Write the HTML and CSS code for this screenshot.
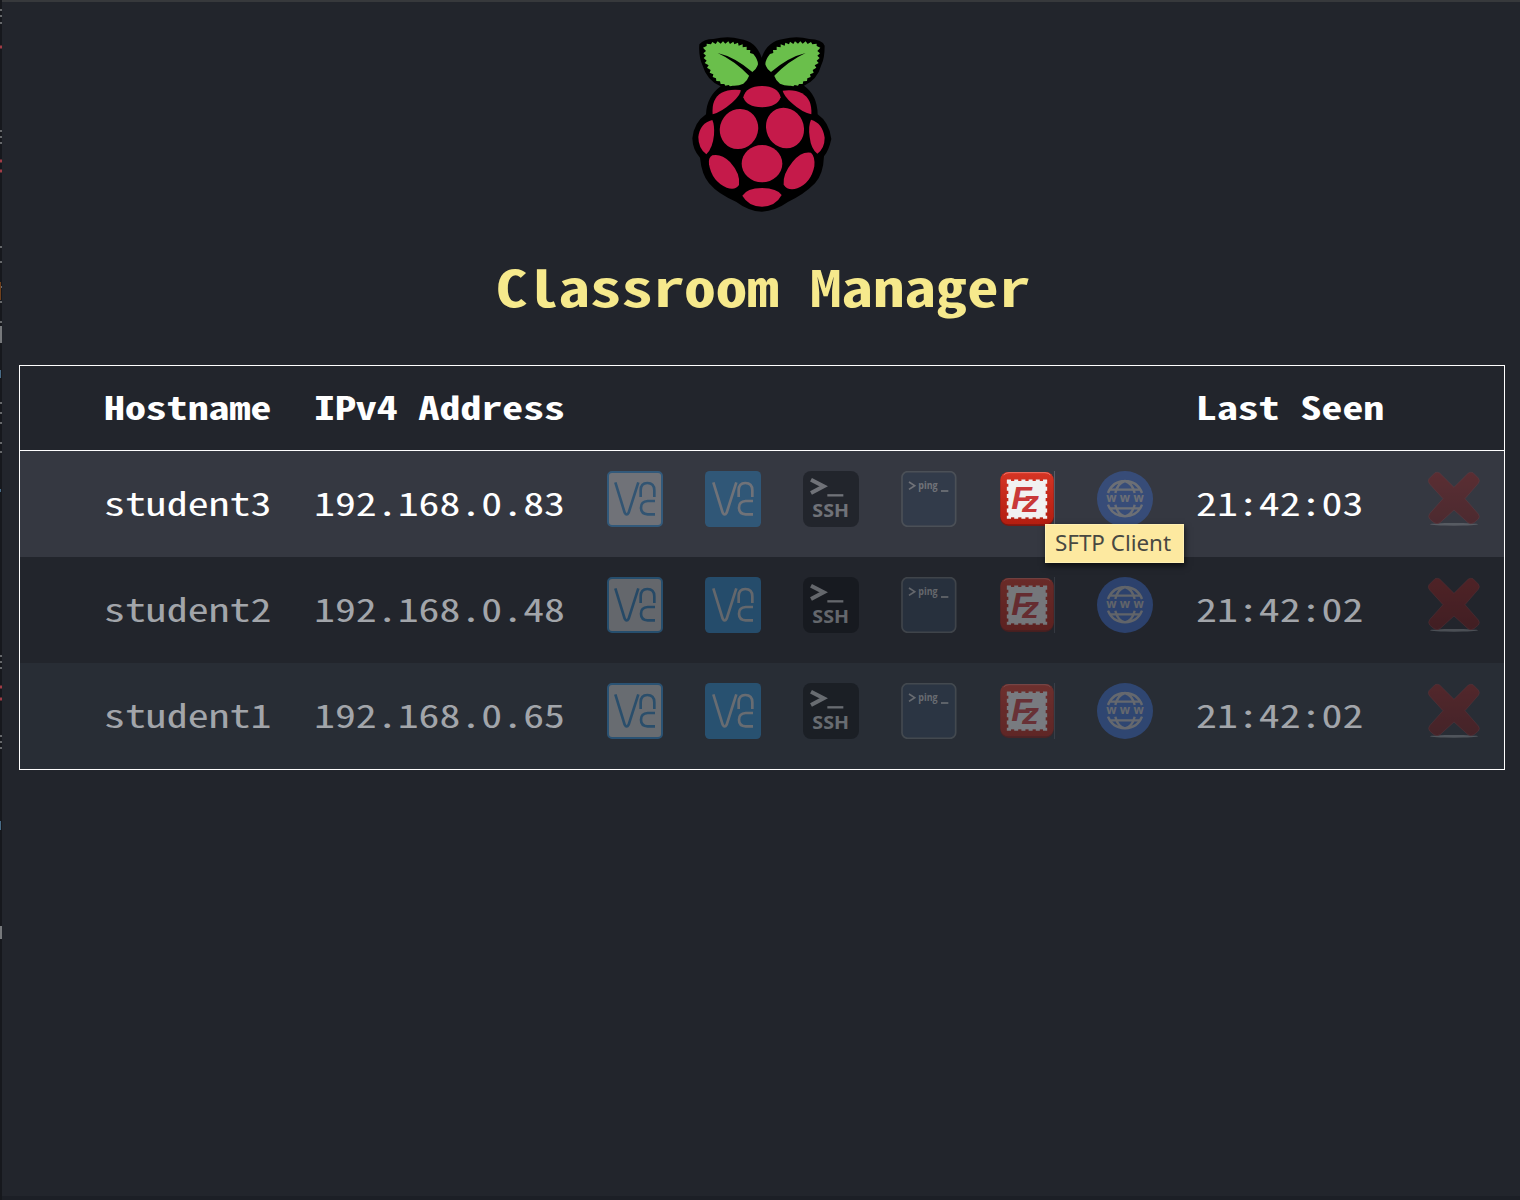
FILE: index.html
```
<!DOCTYPE html>
<html lang="en">
<head>
<meta charset="utf-8">
<title>Classroom Manager</title>
<link rel="stylesheet" href="styles.css">
</head>
<body>
<svg class="edge" width="2" height="1200" viewBox="0 0 2 1200" aria-hidden="true">
  <rect width="2" height="1200" fill="#16181d"/>
  <path stroke="#66686b" stroke-width="2" d="M0 10h2M0 16h2M0 23h2M0 131h2M0 137h2M0 143h2M0 247h2M0 262h2M0 287h2M0 302h2M0 322h2M0 403h2M0 413h2M0 423h2M0 443h2M0 452h2M0 656h2M0 662h2M0 668h2M0 736h2M0 742h2M0 748h2"/>
  <path stroke="#a03c46" stroke-width="3" d="M0 47h2M0 161h2M0 171h2M0 687h2M0 699h2"/>
  <path stroke="#70401c" stroke-width="2" d="M0 282v18"/>
  <path stroke="#77797c" stroke-width="4" d="M0 326v17M0 926v13"/>
  <path stroke="#486b86" stroke-width="2" d="M0 370v8M0 489v3M0 821v9"/>
</svg>
<main class="window">
  <header class="masthead">
    <svg class="logo" viewBox="0 0 495 585" role="img" aria-label="Raspberry">
      <path d="M58 58Q72 42 100 42Q145 32 180 42Q228 48 245 98Q262 48 310 42Q350 32 388 42Q425 42 434 62Q434 100 424 120Q412 165 372 182Q412 210 413 268Q448 292 454 342Q446 378 432 394Q430 448 405 475Q370 510 325 530Q285 558 245 560Q205 558 168 530Q115 508 87 475Q65 448 60 398Q38 375 37 340Q42 292 78 268Q80 215 122 184Q80 165 68 122Q55 95 58 58Z"/>
      <g id="leaf">
        <path fill="#6abf4b" d="M69 68L80 63L80 56L93 58L97 51L107 57L113 49L122 56L129 49L136 56L145 49L150 57L160 50L163 58L174 53L176 62L188 58L188 67L200 65L200 75L211 75L210 84L220 87Q234 104 234 118Q230 132 217 141Q206 149 207 153Q202 168 190 176Q176 183 158 182L150 184L146 180L136 182L133 177L122 177L120 169L109 168L108 160L98 156L100 148L89 143L92 135L81 128L86 121L74 114L80 107L71 99L78 92L70 85L78 78Z"/>
        <path d="M113 84Q165 96 218 142L208 153Q165 108 113 84Z"/>
      </g>
      <use href="#leaf" transform="matrix(-1 0 0 1 490 0)"/>
      <g fill="#c51a4a">
        <path d="M190 217Q197 184 246 183Q294 184 302 217Q292 246 246 247Q199 246 190 217Z"/>
        <path d="M98 268Q94 220 125 203Q147 191 182 195Q184 208 156 233Q125 260 98 268Z"/>
        <path d="M394 268Q397 223 366 205Q343 192 308 197Q311 212 336 235Q366 262 394 268Z"/>
        <ellipse cx="177" cy="312" rx="57" ry="61" transform="rotate(25 177 312)"/>
        <ellipse cx="315" cy="309" rx="56" ry="62" transform="rotate(-25 315 309)"/>
        <ellipse cx="246" cy="416" rx="61" ry="56"/>
        <path d="M97 285Q104 300 102 330Q98 370 79 388Q55 370 55 336Q60 294 97 285Z"/>
        <path d="M393 284Q384 304 389 336Q393 372 412 386Q434 370 434 338Q428 294 393 284Z"/>
        <path d="M97 391Q124 385 150 411Q182 446 177 480Q166 497 140 488Q96 470 87 418Q84 398 97 391Z"/>
        <path d="M393 383Q364 378 338 410Q307 448 311 479Q324 499 352 490Q393 474 403 424Q406 395 393 383Z"/>
        <path d="M187 512Q200 490 246 489Q292 490 305 510Q287 544 246 545Q205 544 187 512Z"/>
      </g>
    </svg>
    <h1 class="title"><span class="wide">Classroom Manager</span></h1>
  </header>

  <svg class="paints" width="0" height="0" aria-hidden="true">
    <defs>
      <linearGradient id="xfill" x2="0" y2="1"><stop stop-color="#92201f"/><stop offset="1" stop-color="#701617"/></linearGradient>
      <linearGradient id="fzfill" x2="0" y2="1"><stop stop-color="#d63524"/><stop offset=".5" stop-color="#c3281a"/><stop offset="1" stop-color="#b31e10"/></linearGradient>
    </defs>
  </svg>
  <svg class="symbols" aria-hidden="true">
    <symbol id="vncmark" viewBox="0 0 168 168">
      <path d="M25 34L53 125Q59 136 65 125L94 34M101 78V58Q101 36 121 36Q142 36 142 58V78M144 90H122Q102 91 102 110Q102 129 122 130H144" fill="none" stroke="currentColor" stroke-width="8"/>
    </symbol>
    <symbol id="vncview" viewBox="0 0 168 168">
      <rect x="3" y="3" width="162" height="162" rx="12" fill="#c8cacc" stroke="#2e8bd0" stroke-width="6"/>
      <use href="#vncmark" color="#2e80bd"/>
    </symbol>
    <symbol id="vnc" viewBox="0 0 168 168">
      <rect width="168" height="168" rx="14" fill="#2a87c9"/>
      <use href="#vncmark" color="#c8cacc"/>
    </symbol>
    <symbol id="ssh" viewBox="0 0 168 168">
      <rect width="168" height="168" rx="24" fill="#080b0f"/>
      <path d="M24 26L62 46L24 66" fill="none" stroke="#c8cacc" stroke-width="12"/>
      <path d="M73 73H121" stroke="#c8cacc" stroke-width="7"/>
      <text x="28" y="138" textLength="110" lengthAdjust="spacingAndGlyphs" class="ssh-text">SSH</text>
    </symbol>
    <symbol id="ping" viewBox="0 0 168 168">
      <rect x="3" y="2" width="161" height="164" rx="17" fill="#304158" stroke="#6c7478" stroke-width="5"/>
      <path d="M24 33L41 44L24 55" fill="none" stroke="#c8cacc" stroke-width="5"/>
      <text x="52" y="54" textLength="58" lengthAdjust="spacingAndGlyphs" class="ping-text">ping</text>
      <path d="M120 60H142" stroke="#c8cacc" stroke-width="5"/>
    </symbol>
    <symbol id="fz" viewBox="0 0 168 168">
      <rect x="4" y="3" width="160" height="162" rx="25" fill="#7d1710"/>
      <rect x="4" y="3" width="160" height="157" rx="24" fill="url(#fzfill)"/>
      <path d="M14 12Q20 5 30 5H138Q149 5 154 12" fill="none" stroke="#eb7569" stroke-width="3"/>
      <rect x="28" y="30" width="112" height="109" fill="#f1f1f1"/>
      <path d="M24 29H144M24 140H144M27 26V143M141 26V143" fill="none" stroke="#f1f1f1" stroke-width="7" stroke-dasharray="12 9.600"/>
      <text x="37" y="115" textLength="62" lengthAdjust="spacingAndGlyphs" class="fz-text fz-f">F</text>
      <text x="69" y="123" textLength="51" lengthAdjust="spacingAndGlyphs" class="fz-text fz-z">z</text>
      <path d="M167 0V168" stroke="#777c86" stroke-width="2"/>
    </symbol>
    <symbol id="www" viewBox="0 0 168 168">
      <circle cx="84" cy="84" r="84" fill="#3b6ccc"/>
      <g fill="none" stroke="#c0c2c4" stroke-width="7">
        <path d="M33 66Q46 31 84 30Q122 31 135 66M33 101Q46 135 84 136Q122 135 135 101M55 66Q62 36 84 30Q106 36 113 66M55 101Q62 131 84 136Q106 131 113 101M40 56H128M40 112H128"/>
      </g>
      <text x="28" y="94" textLength="112" lengthAdjust="spacing" class="www-text">www</text>
    </symbol>
    <symbol id="remove" viewBox="0 0 168 168">
      <ellipse cx="84" cy="160" rx="72" ry="4" fill="#8a8f94"/>
      <path d="M27 5Q34 2 41 6L84 49L127 6Q134 2 141 5L157 21Q163 29 157 37L117 83L157 129Q163 137 157 144L144 155Q134 161 126 155L84 117L42 155Q33 161 24 155L11 144Q5 136 11 128L51 83L11 39Q4 31 9 23Z" fill="url(#xfill)" stroke="#9c4046" stroke-width="1.500"/>
    </symbol>
  </svg>

  <section class="hosts">
    <div class="row head">
      <span class="host wide">Hostname</span><span class="ip wide">IPv4 Address</span><span class="seen wide">Last Seen</span>
    </div>
    <div class="row active">
      <span class="host wide">student3</span><span class="ip wide">192.168.0.83</span>
      <div class="tools">
        <svg class="icon"><use href="#vncview"/></svg><svg class="icon"><use href="#vnc"/></svg><svg class="icon"><use href="#ssh"/></svg><svg class="icon"><use href="#ping"/></svg>
        <div class="tip-anchor"><svg class="icon hovered"><use href="#fz"/></svg><div class="tooltip">SFTP Client</div></div>
        <svg class="icon"><use href="#www"/></svg>
      </div>
      <span class="seen wide">21:42:03</span><svg class="icon remove"><use href="#remove"/></svg>
    </div>
    <div class="row">
      <span class="host wide">student2</span><span class="ip wide">192.168.0.48</span>
      <div class="tools">
        <svg class="icon"><use href="#vncview"/></svg><svg class="icon"><use href="#vnc"/></svg><svg class="icon"><use href="#ssh"/></svg><svg class="icon"><use href="#ping"/></svg><svg class="icon"><use href="#fz"/></svg><svg class="icon"><use href="#www"/></svg>
      </div>
      <span class="seen wide">21:42:02</span><svg class="icon remove"><use href="#remove"/></svg>
    </div>
    <div class="row odd">
      <span class="host wide">student1</span><span class="ip wide">192.168.0.65</span>
      <div class="tools">
        <svg class="icon"><use href="#vncview"/></svg><svg class="icon"><use href="#vnc"/></svg><svg class="icon"><use href="#ssh"/></svg><svg class="icon"><use href="#ping"/></svg><svg class="icon"><use href="#fz"/></svg><svg class="icon"><use href="#www"/></svg>
      </div>
      <span class="seen wide">21:42:02</span><svg class="icon remove"><use href="#remove"/></svg>
    </div>
  </section>
</main>
</body>
</html>
```
FILE: styles.css
```
* { box-sizing: border-box; }
body {
  margin: 0;
  height: 1200px;
  display: flex;
  overflow: hidden;
  background: #22252c;
  font-family: "Noto Sans Mono CJK JP", "Liberation Mono", monospace;
}
.edge { flex: none; display: block; }
.window {
  flex: 1;
  border-top: 2px solid #37393c;
  border-bottom: 4px solid #1c1f26;
  padding: 23px 15px 0 17px;
}
.masthead { display: flex; flex-direction: column; align-items: center; }
.logo { width: 165px; height: 195px; margin-left: 1px; }
.title {
  margin: 26px 0 0 1px;
  height: 80px;
  line-height: 80px;
  font-size: 49.4px;
  font-weight: 700;
  color: #f6e98c;
  white-space: nowrap;
}
.wide {
  display: inline-block;
  justify-self: start;
  transform: scaleX(1.284);
  transform-origin: left center;
}
.title .wide { transform: scaleX(1.273); transform-origin: center; }
.paints { position: absolute; }
.symbols { display: none; }
.hosts { margin-top: 39px; border: 1px solid #fff; }
.row {
  display: grid;
  grid-template-columns: 210px 293px 589px 230px 56px;
  height: 106px;
  padding-left: 84px;
  font-size: 32.6px;
  line-height: 102px;
  color: #a2a5aa;
  white-space: nowrap;
}
.head {
  height: 85px;
  line-height: 79px;
  border-bottom: 1px solid #fff;
  font-weight: 700;
  color: #fff;
}
.head .seen { grid-column: 4; }
.active { background: #353841; color: #fff; }
.odd { background: #282d35; }
.tools { display: flex; gap: 42px; padding-top: 20px; }
.icon { display: block; width: 56px; height: 56px; opacity: .4; }
.icon.hovered { opacity: 1; }
.remove { margin-top: 20px; }
.tip-anchor { position: relative; width: 56px; height: 56px; }
.tooltip {
  position: absolute;
  left: 46px;
  top: 53px;
  z-index: 2;
  width: 139px;
  height: 39px;
  padding-left: 9px;
  border: 1px solid #fff0b4;
  background: #fde9a0;
  box-shadow: 1px 3px 6px rgba(0, 0, 0, .6);
  color: #484842;
  font: 22.4px/35px "Noto Sans", sans-serif;
}
.ssh-text { font: 700 51px "Open Sans", sans-serif; fill: #c8cacc; }
.ping-text { font: 700 33px "Open Sans", sans-serif; fill: #c8cacc; }
.www-text { font: 700 36px "Open Sans", sans-serif; fill: #c0c2c4; }
.fz-text { font-family: "Liberation Sans", sans-serif; font-weight: 700; font-style: italic; fill: #c93838; }
.fz-f { font-size: 96px; }
.fz-z { font-size: 90px; }
```
